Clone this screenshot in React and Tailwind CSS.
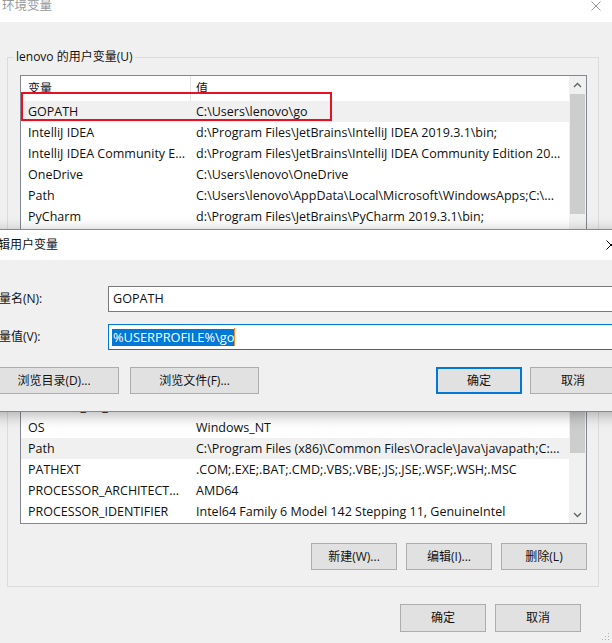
import React from "react";

const userRows = [
  ["GOPATH", "C:\\Users\\lenovo\\go"],
  ["IntelliJ IDEA", "d:\\Program Files\\JetBrains\\IntelliJ IDEA 2019.3.1\\bin;"],
  ["IntelliJ IDEA Community E...", "d:\\Program Files\\JetBrains\\IntelliJ IDEA Community Edition 20..."],
  ["OneDrive", "C:\\Users\\lenovo\\OneDrive"],
  ["Path", "C:\\Users\\lenovo\\AppData\\Local\\Microsoft\\WindowsApps;C:\\..."],
  ["PyCharm", "d:\\Program Files\\JetBrains\\PyCharm 2019.3.1\\bin;"],
  ["TEMP", "C:\\Users\\lenovo\\AppData\\Local\\Temp"],
];

const sysRows = [
  ["ComSpec", "C:\\WINDOWS\\system32\\cmd.exe"],
  ["DriverData", "C:\\Windows\\System32\\Drivers\\DriverData"],
  ["NUMBER_OF_PROCESSORS", "8"],
  ["OS", "Windows_NT"],
  ["Path", "C:\\Program Files (x86)\\Common Files\\Oracle\\Java\\javapath;C:..."],
  ["PATHEXT", ".COM;.EXE;.BAT;.CMD;.VBS;.VBE;.JS;.JSE;.WSF;.WSH;.MSC"],
  ["PROCESSOR_ARCHITECT...", "AMD64"],
  ["PROCESSOR_IDENTIFIER", "Intel64 Family 6 Model 142 Stepping 11, GenuineIntel"],
];

function ChevUp() {
  return (
    <svg width="9" height="6" viewBox="0 0 9 6">
      <path d="M1 5 L4.5 1.5 L8 5" fill="none" stroke="#606060" strokeWidth="1.3" />
    </svg>
  );
}
function ChevDown() {
  return (
    <svg width="9" height="6" viewBox="0 0 9 6">
      <path d="M1 1 L4.5 4.5 L8 1" fill="none" stroke="#606060" strokeWidth="1.3" />
    </svg>
  );
}

function ListBox({ rows, hl, hClass, thumbClass }) {
  return (
    <div className={`flex border border-[#828790] bg-white ${hClass}`}>
      <div className="flex-1 flex flex-col overflow-hidden">
        <div className="h-[25px] shrink-0 flex">
          <div className="w-[170px] shrink-0 h-full pl-[7px] flex items-center border-r border-[#e5e5e5] text-[12px]">变量</div>
          <div className="pl-[5px] flex items-center text-[12px]">值</div>
        </div>
        {rows.map(([n, v], i) => (
          <div
            key={i}
            className={`h-[21px] shrink-0 flex items-center whitespace-nowrap ${i === hl ? "bg-[#f0f0f0]" : ""}`}
          >
            <div className="w-[170px] shrink-0 pl-[7px] overflow-hidden">{n}</div>
            <div className="pl-[5px] overflow-hidden">{v}</div>
          </div>
        ))}
      </div>
      <div className="w-[17px] shrink-0 bg-[#f0f0f0] flex flex-col">
        <div className="h-[17px] shrink-0 flex items-center justify-center">
          <ChevUp />
        </div>
        <div className="flex-1 flex flex-col">
          <div className={`mx-[1px] bg-[#cdcdcd] ${thumbClass}`} />
        </div>
        <div className="h-[17px] shrink-0 flex items-center justify-center">
          <ChevDown />
        </div>
      </div>
    </div>
  );
}

function Btn({ children, w, h = "h-[27px]", def }) {
  return (
    <div
      className={`${h} ${w} shrink-0 flex items-center justify-center bg-[#e1e1e1] text-[12px] ${
        def ? "border-2 border-[#0078d7]" : "border border-[#adadad]"
      }`}
    >
      {children}
    </div>
  );
}

export default function App() {
  return (
    <div className="relative w-[612px] h-[643px] overflow-hidden bg-[#f0f0f0] font-['Open_Sans','Noto_Sans_CJK_SC',sans-serif] text-[12.5px] leading-[16px] text-[#111]">
      {/* background window title bar */}
      <div className="h-[22px] bg-white flex justify-between items-start">
        <span className="pl-[2px] leading-[12px] text-[12.5px] text-[#999999]">环境变量</span>
        <svg className="mt-[1px] mr-[11px]" width="10" height="10" viewBox="0 0 10 10">
          <path d="M0.5 0.5L9.5 9.5M9.5 0.5L0.5 9.5" stroke="#999999" strokeWidth="1" />
        </svg>
      </div>

      {/* user variables */}
      <fieldset className="ml-[7px] w-[592px] mt-[27px] border border-[#dcdcdc] p-0">
        <legend className="ml-[6px] px-[2px] leading-[16px] text-[12px]">lenovo 的用户变量(U)</legend>
        <div className="pl-[12px] pb-[13px]">
          <div className="mt-[10px] w-[567px] relative">
            <ListBox rows={userRows} hl={0} hClass="h-[170px]" thumbClass="mt-[1px] h-[120px]" />
            <div className="absolute left-[1px] top-[17px] w-[311px] h-[29px] border-2 border-[#e81123]" />
          </div>
          <div className="mt-[10px] w-[567px] flex justify-end gap-[9px]">
            <Btn w="w-[86px]">新建(N)...</Btn>
            <Btn w="w-[86px]">编辑(E)...</Btn>
            <Btn w="w-[86px]">删除(D)</Btn>
          </div>
        </div>
      </fieldset>

      {/* system variables */}
      <fieldset className="ml-[7px] w-[592px] mt-[6px] border border-[#dcdcdc] p-0">
        <legend className="ml-[6px] px-[2px] leading-[16px] text-[12px]">系统变量(S)</legend>
        <div className="pl-[12px] pb-[16px]">
          <div className="mt-[10px] w-[567px]">
            <ListBox rows={sysRows} hl={4} hClass="h-[196px]" thumbClass="h-[107px]" />
          </div>
          <div className="mt-[19px] w-[567px] flex justify-end gap-[9px]">
            <Btn w="w-[86px]">新建(W)...</Btn>
            <Btn w="w-[86px]">编辑(I)...</Btn>
            <Btn w="w-[86px]">删除(L)</Btn>
          </div>
        </div>
      </fieldset>

      <div className="mt-[17px] flex justify-end gap-[9px] pr-[31px]">
        <Btn w="w-[86px]" h="h-[28px]">确定</Btn>
        <Btn w="w-[86px]" h="h-[28px]">取消</Btn>
      </div>

      {/* resize grip */}
      <svg className="absolute right-[2px] bottom-[2px]" width="10" height="10" viewBox="0 0 10 10">
        <rect x="8" y="2" width="1" height="1" fill="#b0b0b0" />
        <rect x="5" y="5" width="1" height="1" fill="#b0b0b0" />
        <rect x="8" y="5" width="1" height="1" fill="#b0b0b0" />
        <rect x="2" y="8" width="1" height="1" fill="#b0b0b0" />
        <rect x="5" y="8" width="1" height="1" fill="#b0b0b0" />
        <rect x="8" y="8" width="1" height="1" fill="#b0b0b0" />
      </svg>

      {/* edit user variable dialog (overlapping window) */}
      <div className="absolute top-[229px] left-[-24px] w-[680px] h-[183px] border-y border-[#8a8a8a] bg-[#f0f0f0] shadow-[0_3px_14px_rgba(0,0,0,0.3)] flex flex-col text-[12px]">
        <div className="h-[30px] shrink-0 bg-white flex items-center justify-between pl-[10px] pr-[40px]">
          <span>编辑用户变量</span>
          <svg width="10" height="10" viewBox="0 0 10 10">
            <path d="M0.5 0.5L9.5 9.5M9.5 0.5L0.5 9.5" stroke="#000" strokeWidth="1" />
          </svg>
        </div>
        <div className="mt-[26px] flex items-center">
          <div className="w-[132px] shrink-0 pl-[11px]">变量名(N):</div>
          <div className="flex-1 h-[26px] border border-[#7a7a7a] bg-white flex items-center pl-[4px] text-[12.6px]">GOPATH</div>
        </div>
        <div className="mt-[12px] flex items-center">
          <div className="w-[132px] shrink-0 pl-[11px]">变量值(V):</div>
          <div className="flex-1 h-[26px] border border-[#0078d7] bg-white flex items-center pl-[3px]">
            <span className="bg-[#0078d7] text-white leading-[17px] pl-[1px] text-[12.8px]">%USERPROFILE%\go</span>
            <span className="w-[1px] h-[18px] bg-[#f08a24]" />
          </div>
        </div>
        <div className="mt-[17px] flex pl-[13px]">
          <Btn w="w-[130px]">浏览目录(D)...</Btn>
          <div className="ml-[11px]">
            <Btn w="w-[129px]">浏览文件(F)...</Btn>
          </div>
          <div className="ml-[177px]">
            <Btn w="w-[86px]" def>确定</Btn>
          </div>
          <div className="ml-[8px]">
            <Btn w="w-[86px]">取消</Btn>
          </div>
        </div>
      </div>
    </div>
  );
}
